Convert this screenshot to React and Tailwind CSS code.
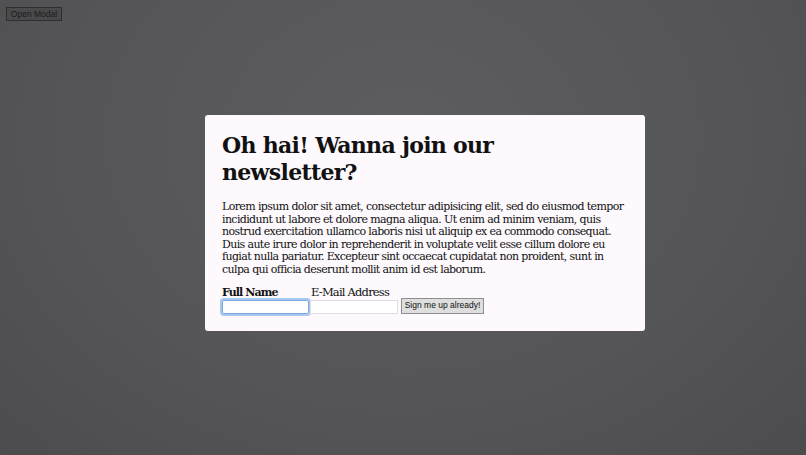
export default function App() {
  return (
    <div className="h-[455px] w-[806px] overflow-hidden bg-[radial-gradient(ellipse_at_50%_30%,#5d5d60_0%,#555557_60%,#4c4c4e_100%)] font-['Liberation_Serif',serif]">
      <div className="px-[6px] pt-[7px]">
        <button className="flex h-[14px] w-[56px] items-center justify-center border border-[#2e2e2e] bg-[#4a4a4c] font-['Liberation_Sans',sans-serif] text-[8.5px] leading-none text-[#1a1a1a]">
          Open Modal
        </button>
      </div>

      <div className="ml-[205px] mt-[94px] h-[216px] w-[440px] rounded-[3px] bg-[#fdf9fd] px-[17px] pt-[17px] text-[#111]">
        <h1 className="font-['DejaVu_Serif',serif] text-[22px] font-bold leading-[27px] tracking-[-0.7px]">
          Oh hai! Wanna join our
          <br />
          newsletter?
        </h1>

        <p className="mt-[15px] whitespace-nowrap font-['DejaVu_Serif',serif] text-[11px] leading-[12.6px] tracking-[-0.62px]">
          Lorem ipsum dolor sit amet, consectetur adipisicing elit, sed do eiusmod tempor
          <br />
          incididunt ut labore et dolore magna aliqua. Ut enim ad minim veniam, quis
          <br />
          nostrud exercitation ullamco laboris nisi ut aliquip ex ea commodo consequat.
          <br />
          Duis aute irure dolor in reprehenderit in voluptate velit esse cillum dolore eu
          <br />
          fugiat nulla pariatur. Excepteur sint occaecat cupidatat non proident, sunt in
          <br />
          culpa qui officia deserunt mollit anim id est laborum.
        </p>

        <div className="mt-[9px] flex items-end font-['DejaVu_Serif',serif]">
          <div className="flex flex-col">
            <span className="text-[11px] font-bold leading-[13px] tracking-[-0.9px]">Full Name</span>
            <input className="mt-[1px] h-[14px] w-[87px] rounded-[2px] border border-[#7aa7e0] bg-white outline outline-2 outline-[#a9c8f0]" />
          </div>
          <div className="ml-[1px] flex flex-col">
            <span className="ml-[1px] text-[11.5px] leading-[13px] tracking-[-0.8px]">E-Mail Address</span>
            <input className="mt-[1px] h-[14px] w-[88px] border border-[#e2dde2] bg-white" />
          </div>
          <button className="ml-[3px] flex h-[16px] w-[83px] items-center justify-center border border-[#8f8f8f] bg-[#dedede] font-['Liberation_Sans',sans-serif] text-[8.5px] leading-none text-[#111]">
            Sign me up already!
          </button>
        </div>
      </div>
    </div>
  )
}
